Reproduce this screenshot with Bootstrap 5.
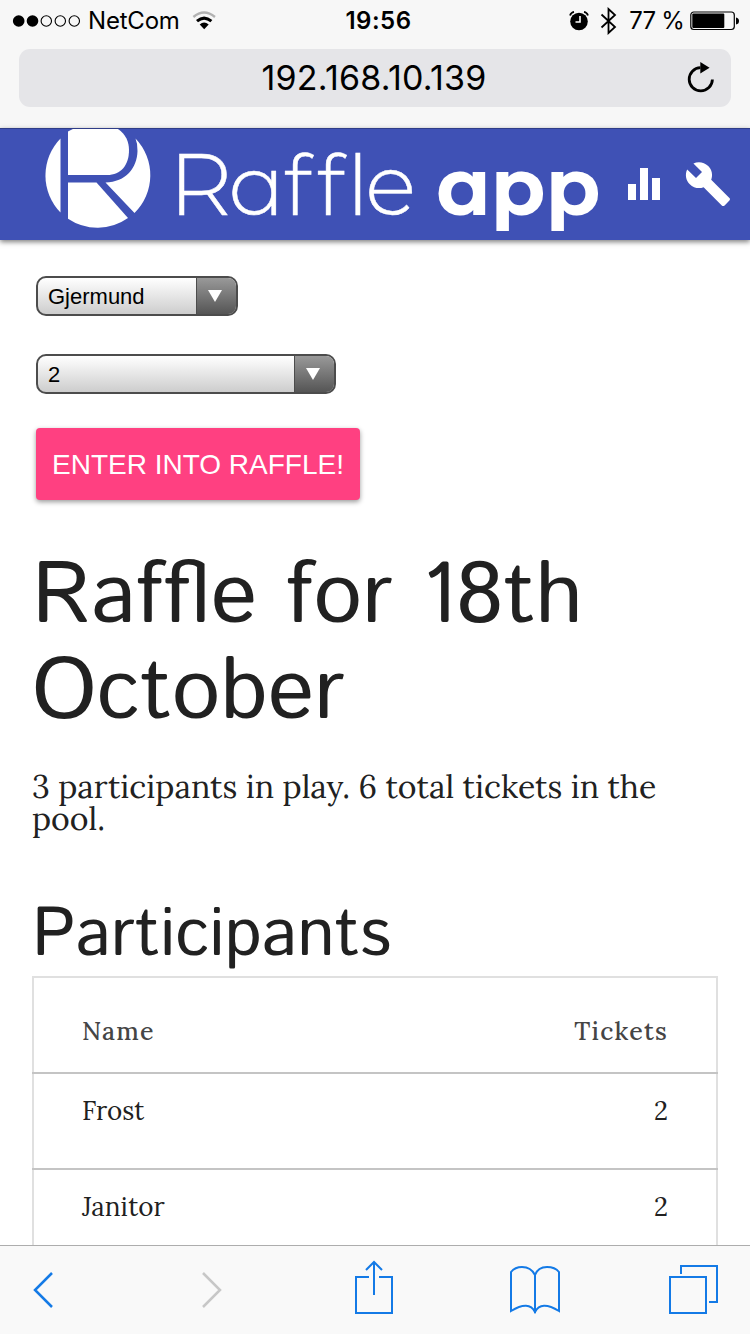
<!DOCTYPE html>
<html lang="en">
<head>
<meta charset="utf-8">
<meta name="viewport" content="width=device-width, initial-scale=1">
<title>Raffle app</title>
<link href="https://cdn.jsdelivr.net/npm/bootstrap@5.3.0/dist/css/bootstrap.min.css" rel="stylesheet">
<style>
body{height:1334px;overflow:hidden;background:#fff;color:#212121;font-family:"Liberation Sans",Arial,sans-serif}
svg{display:block;flex:none}
.browser-top{height:128px;background:#f7f7f7;color:#000;font-family:Inter,sans-serif}
.status-bar{height:49px;padding:1px 11px 8px 12px;font-size:24px;line-height:40px}
.status-side{width:300px}
.carrier{letter-spacing:-.2px;padding:0 10px 0 7px}
.clock{font-weight:600;letter-spacing:.5px;margin-left:6px}
.bluetooth{margin:0 2px 0 10px}
.percent{letter-spacing:-.8px;padding-left:10px;margin-right:6px}
.address{height:58px;margin:0 19px;background:#e5e5e8;border-radius:11px;padding-right:15px;padding-left:43px}
.address-text{font-size:34px;line-height:56px;padding-bottom:1px;letter-spacing:.25px}
.app-header{height:112px;background:#3f51b5;border-top:1px solid #2f3d88;box-shadow:0 2px 5px rgba(0,0,0,.5);position:relative}
.wordmark{font-family:Montserrat,sans-serif;font-variant-ligatures:none;fill:#fff}
.wordmark .alt{font-family:"Montserrat Alternates",Montserrat,sans-serif}
.thin{stroke:#fff;stroke-width:.5px}
.chart-icon{margin-left:17px}
.wrench-icon{margin:31px 0 0 23px}
.main-area{height:1005px;overflow:hidden;padding:36px 32px 0}
.picker{height:40px;border:2px solid #4c4c4c;border-radius:10px;background:linear-gradient(#fff,#cdcdcd);font-size:22px;line-height:37px;color:#000;overflow:hidden;margin-left:4px;padding-left:10px}
.picker-arrow{width:40px;border-left:1px solid #4c4c4c;background:linear-gradient(#999,#555);padding-right:3px}
.pick-name{width:202px;margin-bottom:38px}
.pick-count{width:300px;margin-bottom:34px}
.raffle-btn{width:324px;height:72px;margin-left:4px;border:0;border-radius:4px;background:#ff4081;color:#fff;font-size:28px;padding:2px 0 0;box-shadow:0 2px 5px rgba(0,0,0,.4);white-space:nowrap}
.raffle-btn:hover{background:#ff4081;color:#fff}
h1,h2{font-family:"Istok Web","Noto Sans",sans-serif;font-weight:400;margin:0}
h1{font-size:86.600px;line-height:96px;margin-top:50px}
h2{font-size:68px;line-height:80px;margin-top:61px}
.serif{font-family:Lora,"Liberation Serif",serif}
.summary{font-size:32px;line-height:32px;margin:29px 0 0}
.entries{width:686px;border:2px solid #e0e0e0;border-bottom:0;font-size:26px}
.entry{height:96px;margin:0 -2px;padding:0 50px;border-top:2px solid #c4c4c4;line-height:74px}
.entry-head{height:94px;border-top:0;color:#454545;line-height:107px;font-weight:500;letter-spacing:1.2px;font-size:25px}
.toolbar{height:89px;background:#f9f9f9;border-top:1px solid #adadad}
</style>
</head>
<body>
<div class="browser-top">
  <div class="status-bar d-flex justify-content-between">
    <div class="status-side d-flex align-items-center">
      <svg width="69" height="14" viewBox="0 0 69 14"><g fill="#000"><circle cx="6.700" cy="7" r="5.800"/><circle cx="20.500" cy="7" r="5.800"/></g><g fill="none" stroke="#000" stroke-width="1.100"><circle cx="34.300" cy="7" r="5.200"/><circle cx="48.300" cy="7" r="5.200"/><circle cx="62.300" cy="7" r="5.200"/></g></svg>
      <span class="carrier">NetCom</span>
      <svg width="28" height="20" viewBox="0 0 28 20"><g fill="none"><path d="M3.400 6Q14-2.800 25 6" stroke="#b2b2b2" stroke-width="2.400"/><path d="M7 10.200Q14 4 21.400 10.200" stroke="#000" stroke-width="3"/></g><path d="M9.700 13.500Q14 9.500 18.700 13.500L14.200 18.300Z"/></svg>
    </div>
    <span class="clock">19:56</span>
    <div class="status-side d-flex align-items-center justify-content-end">
      <svg width="22" height="20" viewBox="0 0 22 20"><circle cx="11" cy="10.500" r="8.800"/><path d="M2 4.500Q3 1.500 6 .9M20 4.500Q19 1.500 16 .9" stroke="#000" stroke-width="1.700" fill="none"/><path d="M12 5V11H7.500" stroke="#fff" stroke-width="1.600" fill="none"/></svg>
      <svg class="bluetooth" width="17" height="28" viewBox="0 0 17 28"><path d="M1.500 7.500L15 20L8.500 26V2L15 8L1.500 20.500" fill="none" stroke="#000" stroke-width="1.800"/></svg>
      <span class="percent">77 %</span>
      <svg width="49" height="20" viewBox="1 0 49 20"><rect x="1.800" y="1" width="43.500" height="17.500" rx="3" fill="none" stroke="#000" stroke-width="1.200"/><rect x="3.300" y="2.600" width="32" height="14.400" rx="1"/><path d="M47 6.500Q50 7 50 10Q50 13 47 13.500Z"/></svg>
    </div>
  </div>
  <div class="address d-flex align-items-center">
    <span class="address-text flex-fill text-center">192.168.10.139</span>
    <svg width="30" height="34" viewBox="0 0 30 34"><path d="M14.500 6.700A11.600 11.600 0 1 0 26.400 18.500" fill="none" stroke="#000" stroke-width="2.800"/><path d="M14.300 1L23.600 6.800L14.300 12.400Z"/></svg>
  </div>
</div>
<header class="app-header d-flex">
  <svg width="610" height="111" viewBox="0 129 610 111">
    <g fill="#fff"><path d="M60.500 138.500A53 53 0 0 0 60.500 212.500Z"/><path d="M68 131.500Q76 127 84 125H109C123 129 129 139 129 150C129 165 121 175 107 175H68Z"/><path d="M68 182.500H96.500L128 218A53 53 0 0 1 68 218.700Z"/><path d="M135.500 138.500A53 53 0 0 1 134.500 213L105.500 182.500C126 182 137 168 137.500 151Q137.800 144 135.500 138.500Z"/></g>
    <g class="wordmark"><text class="thin" y="215" font-size="83" font-weight="300"><tspan x="168.700" font-size="88">R</tspan><tspan class="alt" x="228.500">a</tspan><tspan x="283.500 316.500 347">ffl</tspan><tspan x="365.300" font-size="85">e</tspan></text><text x="436" y="215" font-size="79.500" font-weight="700" class="alt">app</text></g>
  </svg>
  <svg class="chart-icon" width="34" height="111" viewBox="0 0 34 111"><path fill="#fff" d="M1 55H9V71H1ZM13 39H21V71H13ZM25 49H33V71H25Z"/></svg>
  <svg class="wrench-icon" width="48" height="48" viewBox="0 0 24 24"><path fill="#fff" d="M22.700 19l-9.100-9.100c.9-2.300.4-5-1.500-6.900-2-2-5-2.400-7.400-1.300L9 6 6 9 1.600 4.700C.4 7.100.9 10.100 2.900 12.100c1.900 1.900 4.600 2.400 6.900 1.500l9.100 9.100c.4.400 1 .4 1.400 0l2.300-2.300c.5-.4.5-1.100.1-1.400z"/></svg>
</header>
<main class="main-area">
  <div class="picker pick-name d-flex"><span class="flex-fill">Gjermund</span><span class="picker-arrow d-flex justify-content-center align-items-center"><svg width="16" height="14"><path d="M1 1H15L8 13Z" fill="#fff"/></svg></span></div>
  <div class="picker pick-count d-flex"><span class="flex-fill">2</span><span class="picker-arrow d-flex justify-content-center align-items-center"><svg width="16" height="14"><path d="M1 1H15L8 13Z" fill="#fff"/></svg></span></div>
  <button class="btn raffle-btn" type="button">ENTER INTO RAFFLE!</button>
  <h1>Raffle for 18th<br>October</h1>
  <p class="summary serif">3 participants in play. 6 total tickets in the pool.</p>
  <h2>Participants</h2>
  <section class="entries serif">
    <div class="entry entry-head d-flex justify-content-between"><span>Name</span><span>Tickets</span></div>
    <div class="entry d-flex justify-content-between"><span>Frost</span><span>2</span></div>
    <div class="entry d-flex justify-content-between"><span>Janitor</span><span>2</span></div>
  </section>
</main>
<nav class="toolbar fixed-bottom">
  <svg width="750" height="88" viewBox="0 1246 750 88"><g fill="none" stroke="#147ae6" stroke-width="2"><path d="M52 1273L35 1290L52 1307" stroke-width="2.500"/><path d="M203 1273L220 1290L203 1307" stroke="#c7c7c7" stroke-width="2.500"/><path d="M369 1277H356V1313H392V1277H379M374 1295V1263M366 1270L374 1262L382 1270"/><path d="M535 1313V1275Q531 1267 522 1267Q515 1267 511 1272V1311Q529 1300 535 1312Q541 1300 559 1311V1272Q555 1267 547 1267Q538 1267 535 1275"/><path d="M670 1277H706V1313H670ZM681 1274V1266H717V1302H709"/></g></svg>
</nav>
<script src="https://cdn.jsdelivr.net/npm/bootstrap@5.3.0/dist/js/bootstrap.bundle.min.js"></script>
</body>
</html>
